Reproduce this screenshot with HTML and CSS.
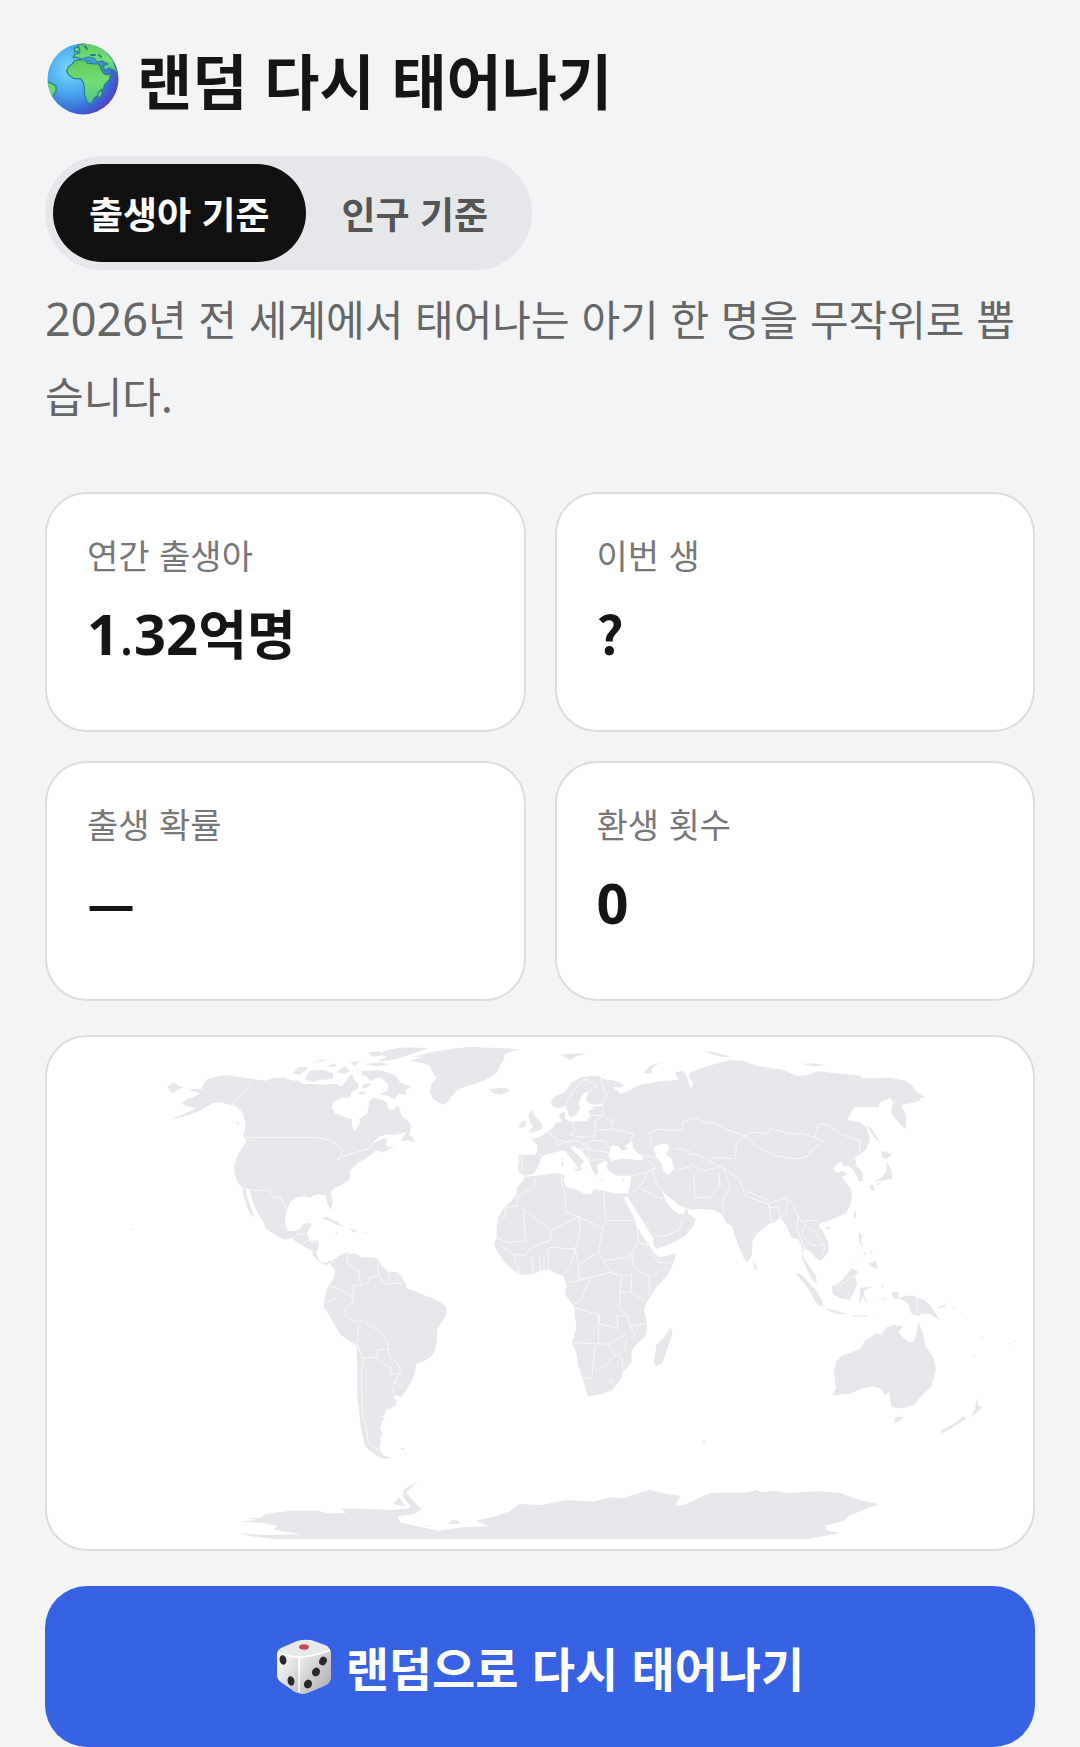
FILE: index.html
```html
<!DOCTYPE html>
<html lang="ko">

<head>
  <meta charset="UTF-8" />
  <meta name="viewport" content="width=device-width, initial-scale=1.0" />
  <title>랜덤 다시 태어나기</title>
  <link rel="stylesheet" href="styles.css">
</head>

<body>
  <main class="page">

    <h1 class="title">
      <svg class="globe" viewBox="0 0 72 72" aria-hidden="true">
        <defs>
          <radialGradient id="sea" cx="0.32" cy="0.36" r="0.72">
            <stop offset="0" stop-color="#7bdcfb" />
            <stop offset="0.5" stop-color="#46a4ee" />
            <stop offset="0.85" stop-color="#3a63d2" />
            <stop offset="1" stop-color="#5a3fc0" />
          </radialGradient>
          <linearGradient id="land" x1="0" y1="0" x2="0" y2="1">
            <stop offset="0" stop-color="#62c95c" />
            <stop offset="0.5" stop-color="#72de78" />
            <stop offset="1" stop-color="#4fc48e" />
          </linearGradient>
          <clipPath id="ball"><circle cx="36" cy="36" r="35.5" /></clipPath>
        </defs>
        <circle cx="36" cy="36" r="35.5" fill="url(#sea)" />
        <g clip-path="url(#ball)" fill="url(#land)" stroke="#2b7f86" stroke-width="1.2" stroke-linejoin="round">
          <path d="M26 15l2-4 5-1-4-2 2-6 13-3 14 8 8 10 5 15-4-5-5-2-4 3-2-5 5-2-6-3-5 1-3-4-6-1-6 2-6-2z" />
          <path d="M19.500 28.700l2-5 4-3 2-3 5-1 6 .5 2 3 5 .5 7 .5 2 6 3 4 6 .5-1 5-5 5-1 5-4 5-5 3-3 6-4-1-3-8 0-6-1-6-3-4-6 0-5-3z" />
          <path d="M51 54l0-4 4-4 0 5-2 4z" />
          <path d="M-1 39l5 1 5 3 0 5-3 5-2 2-6-8z" />
          <path d="M27 5l5-1 1 4-5 1z" />
        </g>
        <g fill="none" stroke="#2b7f86" stroke-width="2" stroke-linecap="round">
          <path d="M36 16l9 2" stroke="#3b93c6" stroke-width="3" />
          <path d="M44 12l4 0M52 12l2 2M38 3l2 3" />
        </g>
      </svg>
      <span>랜덤 다시 태어나기</span>
    </h1>

    <div class="mode">
      <button class="mode-button active" type="button" aria-pressed="true">출생아 기준</button>
      <button class="mode-button" type="button" aria-pressed="false">인구 기준</button>
    </div>

    <p class="description"><span class="year">2026</span>년 전 세계에서 태어나는 아기 한 명을 무작위로 뽑습니다.</p>

    <section class="stats">
      <div class="card">
        <p class="label">연간 출생아</p>
        <p class="value"><span class="num">1<span class="dot">.</span>32</span>억명</p>
      </div>
      <div class="card">
        <p class="label">이번 생</p>
        <p class="value">?</p>
      </div>
      <div class="card">
        <p class="label">출생 확률</p>
        <p class="value">—</p>
      </div>
      <div class="card">
        <p class="label">환생 횟수</p>
        <p class="value"><span class="num">0</span></p>
      </div>
    </section>

    <div class="map-card">
      <svg class="map" viewBox="47 1038 986 512" role="img" aria-label="세계 지도">
        <!-- North America, Greenland, Caribbean -->
        <g transform="translate(150 1035) scale(.33333)">
          <path class="land" d="M160,150 172,135 200,128 230,124 262,128 325,137 345,140 370,133 400,130 430,140 445,138 455,150 490,150 520,152 560,150 575,158 585,145 595,130 605,120 615,140 628,150 622,165 605,175 600,190 575,192 550,205 545,220 555,238 575,245 590,252 605,255 607,275 613,291 620,285 630,265 627,255 650,240 655,225 658,200 670,192 690,195 710,205 715,225 730,228 745,212 752,235 755,245 770,258 785,275 780,290 760,297 735,302 705,302 685,310 668,328 690,318 705,312 712,320 705,330 715,340 735,335 720,345 695,357 690,350 675,352 660,365 640,378 625,385 608,402 600,410 600,430 597,438 570,455 550,465 543,475 548,505 543,528 537,520 530,500 527,485 505,480 490,483 480,492 465,487 440,490 420,505 413,525 405,550 408,580 415,590 435,592 450,585 458,570 480,566 485,570 475,590 470,600 480,618 505,620 507,630 500,662 508,680 525,688 540,678 556,690 548,702 540,688 525,694 505,682 490,665 485,650 465,640 440,625 425,612 405,617 380,605 345,582 343,568 325,540 310,510 300,470 288,462 290,485 300,510 305,525 313,552 300,540 290,515 280,480 278,462 262,445 253,415 253,390 265,360 280,335 290,322 283,310 278,300 285,285 285,265 278,240 265,225 250,213 235,212 215,205 190,207 175,215 155,228 110,245 55,258 120,232 140,222 125,220 95,210 110,195 130,190 150,178 120,170 125,165 155,165z" />
          <path class="land" d="M52,160 72,143 85,155 102,160 80,168 70,178 60,172z" />
          <path class="land" d="M465,135 480,110 520,108 550,118 548,135 510,138 490,145zM428,118 445,100 475,98 465,112 445,122zM645,90 690,85 720,92 680,97zM685,80 710,68 690,60 710,48 760,40 835,42 800,55 770,65 740,75 700,82zM655,55 690,52 695,65 665,68zM480,85 530,75 520,82zM530,97 560,88 555,100zM600,85 630,82 615,95zM560,115 585,95 600,110 585,120zM640,150 665,148 655,158 635,165zM622,182 635,170 650,180z" />
          <path class="land" d="M635,112 690,108 720,118 740,128 750,145 783,158 765,170 770,182 745,180 735,195 710,185 690,182 712,170 715,150 690,130 660,140 650,128 635,122z" />
          <path class="land" d="M752,322 768,295 780,290 778,305 790,310 792,328 775,318zM512,555 530,548 555,560 582,577 560,572 540,560zM597,583 625,590 612,596zM553,594 567,596 560,600zM640,594 652,596 646,599zM256,268 264,262 266,272z" />
          <path class="land" d="M775,82 820,68 790,68 845,55 900,45 960,38 1040,42 1110,45 1065,60 1060,80 1050,95 1045,110 1030,125 1000,140 975,150 940,160 915,175 900,195 885,212 870,208 850,195 840,175 845,150 860,130 845,110 840,95 810,85z" />
          <path class="land" d="M-58,583 -54,582 -53,588 -57,588z" />
          <path class="border" d="M308,142 248,210 270,225 278,240 285,270 282,300 297,318M290,310H500L545,320 575,345 575,365 562,377 600,360 655,345 668,328 695,308M278,462 318,470 355,468 375,492 390,488 410,525M430,612 445,600 465,600M455,632 470,620 502,626M485,650 502,656" />
        </g>
        <!-- South America -->
        <g transform="translate(300 1230) scale(.33333)">
          <path class="land" d="M98,95 115,80 145,68 150,75 165,72 185,85 220,85 232,90 245,108 265,128 295,130 305,145 318,165 320,178 350,188 375,200 400,208 420,218 438,232 440,255 428,275 412,300 410,335 405,365 395,382 370,397 348,405 345,430 335,455 315,490 305,503 285,498 280,503 290,515 288,530 275,538 258,543 255,558 240,562 255,565 245,580 240,602 248,612 240,625 245,640 238,650 240,665 255,682 278,688 250,690 230,680 210,665 195,650 190,630 183,600 180,570 177,540 172,500 172,430 170,350 150,335 125,320 105,290 85,255 70,235 72,225 75,200 85,170 100,150 105,125 98,110z" />
          <path class="land" d="M300,658 315,656 310,662z" />
          <path class="border" d="M145,68 140,95 150,110 175,125 182,168 162,170 158,220 135,240 140,265 165,278 195,272 205,290 240,305 262,340 265,360 235,362 230,385 195,385 188,390 172,345 175,285M182,168 205,160 205,148 235,138 235,90M235,138 250,165 310,162M265,128 270,160M295,130 285,160M85,170 120,180 158,205M75,218 95,218 120,190M230,385 250,405 275,420 270,435 295,435 302,425 290,400 270,385 265,360M302,425 283,460 278,495M283,460 312,475M195,385 185,420 185,480 188,560 200,600 205,640 235,665" />
        </g>
        <!-- Europe, western Asia, Africa -->
        <g transform="translate(470 1035) scale(.33333)">
          <path class="land" d="M145,362 195,362 203,350 200,330 183,315 200,312 215,305 235,292 250,280 255,268 275,262 266,240 285,233 285,255 300,262 330,262 350,260 360,245 355,232 370,225 365,218 398,215 395,210 375,212 355,208 348,195 355,175 345,175 330,195 325,210 332,220 315,245 300,250 290,225 285,215 270,222 250,220 243,205 250,190 285,175 305,145 335,130 365,125 390,125 400,135 435,140 462,152 455,160 430,160 450,180 475,172 495,160 515,150 540,148 560,143 590,140 625,138 615,115 640,110 650,125 660,160 668,150 655,125 665,115 672,110 672,528 640,520 625,512 605,495 585,480 575,468 585,495 605,525 620,537 640,540 650,520 655,540 678,555 665,585 640,610 600,630 560,645 552,635 550,615 530,580 515,555 495,525 480,500 472,484 480,450 485,425 460,425 440,425 420,415 408,400 415,385 405,380 395,385 380,395 385,415 378,425 365,405 355,375 335,350 310,335 300,340 320,360 345,385 335,388 332,410 320,395 300,370 285,350 270,350 255,355 235,360 215,368 210,385 200,405 190,420 165,425 150,418 143,405 148,380z" />
          <path class="land" d="M165,428 200,425 240,420 270,418 285,425 280,440 290,460 315,465 345,480 365,480 370,465 400,470 430,478 470,478 478,488 462,490 475,520 495,555 500,575 515,600 540,640 555,660 565,670 590,665 617,658 615,675 595,720 555,765 530,805 522,825 532,875 528,905 495,935 485,950 485,985 460,1015 450,1040 425,1070 395,1080 355,1087 348,1070 340,1040 325,995 320,960 305,925 320,885 315,845 313,820 285,780 290,755 280,725 260,720 240,708 210,710 190,720 150,722 125,705 100,680 80,650 73,630 80,610 80,565 95,530 125,500 140,480 140,460 160,440z" />
          <path class="land" d="M185,225 195,245 215,270 218,285 200,292 175,297 190,275 180,265 175,245zM145,280 155,262 170,260 165,280zM58,165 80,163 110,162 120,170 95,182 70,178zM270,62 320,58 350,60 320,66 300,78zM522,115 540,95 590,82 560,92 545,105 545,118 530,120zM274,382 281,385 279,398 274,399zM275,368 279,376 275,378zM308,404 330,404 325,413zM386,436 402,438 390,440zM455,436 467,434 460,440zM705,52 735,55 760,65 730,62z" />
          <!-- Black Sea and Caspian Sea -->
          <path class="sea" d="M415,365 425,335 445,335 455,350 475,345 465,335 487,322 490,345 520,372 515,380 485,376 450,374 425,382zM550,340 575,330 592,330 598,345 588,360 605,375 612,405 595,422 580,412 575,390 560,370z" />
          <path class="border" d="M203,362 235,368M235,295 260,315 260,335 300,322 330,320M260,318 300,322M308,262 315,290 300,302 330,310 370,305M375,260 375,290 370,320 340,330 325,345 355,345 360,380 405,375M430,255 425,285 375,290M425,285 460,292 490,300 480,325M360,245 400,245 398,215M375,262 400,245 430,265M370,320 405,320 420,345M330,325 370,350 415,355M290,235 290,200 315,165 340,135 372,150 380,155 350,178M395,130 395,150 410,185 398,212M148,370 158,375 155,415M485,425 530,415 560,402 530,375M530,415 515,450 480,485M515,465 560,490 578,492M545,400 560,450 577,470M545,340 540,295 570,285 605,290 640,285 635,265 672,252M615,345 640,345 672,358M615,410 650,400 672,410M550,605 580,608 625,590 640,550M510,362 560,372" />
          <path class="border" d="M195,435 190,460 145,485 140,515 105,520M140,510 245,590 330,545M275,420 275,445 285,480 288,535 325,548 398,582 385,655M400,475 408,560 398,582M408,560H497M160,530 167,620 115,625 78,612M245,590 240,620 185,640 165,665M240,640 315,645 330,600 328,548M315,645 325,690 325,735 360,730 420,715 455,725 485,720M385,655 330,690M385,655 400,680 430,720M400,680 475,670 480,655M500,575 505,620 485,660 490,700 540,728 590,700M505,625 540,635M545,655 565,685 605,688M235,645 235,708M222,665V710M210,670V712M185,670 190,720M100,640 130,660 150,720M165,665 130,660M315,645 300,700 280,720M105,520 105,550 82,566" />
        </g>
        <!-- Southern Africa -->
        <g transform="translate(540 1200) scale(.33333)">
          <path class="land" d="M392,385 398,405 385,440 365,495 345,502 342,485 350,435 370,418z" />
          <path class="border" d="M80,250 115,245 150,235M100,318 125,300 150,235M245,230 240,280 238,330 265,350M275,225 275,280 312,305M240,280H275M325,235 330,290M103,325 150,340 175,345 180,375 235,388 230,350 265,350 270,380 320,375M95,430 175,435 205,435 240,415 260,405M270,380 285,410 275,418M175,345V435M165,440 155,540 130,535M205,435 225,470 200,495 165,520M225,470 245,475 250,520M225,470 255,455 260,420M205,545 215,538 222,545 212,555z" />
        </g>
        <!-- Eastern Asia -->
        <g transform="translate(690 1035) scale(.33333)">
          <path class="land" d="M0,118 25,105 75,90 120,78 160,80 200,95 240,102 280,108 320,125 345,125 385,112 440,118 510,125 520,133 600,132 640,138 665,152 680,175 705,190 690,192 690,200 665,208 645,210 635,215 650,250 648,285 635,275 605,240 603,225 610,205 600,192 570,205 565,220 520,218 492,220 472,258 510,265 530,280 540,315 530,345 510,362 495,370 500,395 518,415 520,440 508,442 500,425 488,405 475,395 460,395 452,382 428,405 445,418 455,410 472,420 455,430 465,440 480,460 487,490 480,515 465,540 440,550 412,562 395,565 385,575 400,595 415,625 415,655 392,682 375,670 360,650 345,645 338,655 345,680 360,700 378,725 380,748 365,735 350,705 338,675 335,640 325,615 305,612 290,575 270,550 255,565 235,570 200,600 188,620 185,665 172,685 160,670 140,620 125,575 110,568 95,540 70,528 35,525 0,527z" />
          <path class="land" d="M528,270 545,285 572,328 560,318 540,292zM575,350 608,360 590,375 575,370zM590,382 605,410 607,435 575,440 550,445 575,430 590,412zM538,455 550,452 555,468 545,470zM557,450 572,446 562,456zM494,532 498,530 498,555 490,548zM408,580 420,578 415,592zM190,680 203,705 193,708zM505,595 518,605 512,622 520,633 508,628zM535,690 558,680 562,705 548,700zM540,645 548,655 545,662zM520,652 528,658 522,664zM508,662 494,680 496,674zM335,90 360,88 415,93 370,97zM48,52 100,62 125,68 90,68z" />
          <path class="sea" d="M0,135 10,145 6,160 0,162z" />
          <path class="border" d="M0,255 25,253 45,268 70,265 105,285 165,305 180,295 235,298 240,283 290,297 340,300 375,310 385,270 415,272 455,302 510,320 508,355 480,385M165,305 205,340 255,365 320,375 360,365 362,350 400,322 375,310M165,305 140,330 135,375 70,370 60,385 100,400 150,440 165,485 235,510 290,490 315,520 325,550 345,570 380,600 405,640 400,660M165,470 235,500M0,360 25,360 60,385M0,390 40,410 85,400M85,415 90,450 60,490 15,490 10,420M100,400 120,455 95,510 105,540M235,510 245,560M235,520 265,520 270,550M290,495 290,540 270,550M325,545 320,580 345,650M365,635 402,632M330,562 385,558M345,570 335,600 365,635M490,400 505,395" />
        </g>
        <!-- South-east Asia and Oceania -->
        <g transform="translate(760 1200) scale(.33333)">
          <path class="land" d="M105,218 125,228 165,270 188,305 188,325 170,315 145,270zM188,328 225,333 262,346 230,345zM216,262 240,250 275,208 295,218 285,235 292,255 270,303 240,298 218,285zM300,267 340,261 315,274 310,285 325,315 308,295 298,318 300,290zM275,348 325,350 325,353 280,352zM330,360 352,350 340,358zM364,256 370,258 368,268zM352,300 388,297 370,302z" />
          <path class="land" d="M395,280 415,278 415,298 435,290 460,290 495,305 515,325 540,365 510,345 485,343 475,352 455,345 445,315 420,300 400,298zM528,324 555,318 562,308 558,322 540,327zM578,320 588,328 584,330zM615,356 626,362 618,361zM632,460 648,475 644,476zM664,410 672,415 668,417zM743,434 750,432 750,437zM757,427 764,424 762,428z" />
          <path class="land" d="M216,590 228,568 222,520 228,490 245,470 300,450 315,425 350,402 365,408 380,385 400,378 430,382 415,400 440,425 460,432 470,400 475,370 490,405 495,440 520,475 528,510 515,560 485,590 460,618 430,628 395,625 390,600 388,578 375,588 360,568 340,562 300,570 275,583 235,588z" />
          <path class="land" d="M408,653 430,653 418,668 403,672zM650,598 655,620 668,625 645,645 630,655 645,630zM612,650 617,660 570,690 548,703 542,695 580,675z" />
          <path class="border" d="M472,290V350M222,262 250,255 270,235 288,232" />
        </g>
        <!-- Antarctica -->
        <g transform="translate(220 1460) scale(.43367 .33333)">
          <path class="land" d="M45,222 100,228 190,226 150,218 125,212 130,200 100,192 50,188 90,182 60,178 95,176 105,165 160,155 225,155 250,163 290,162 280,148 330,150 400,153 430,150 440,143 420,110 425,90 455,68 430,100 445,125 465,150 450,165 410,172 415,190 450,200 505,215 560,205 620,202 590,185 640,170 670,155 690,135 740,138 800,123 860,128 900,115 930,118 990,92 1030,105 1062,110 1050,140 1070,138 1130,102 1220,100 1235,92 1250,100 1280,95 1310,103 1380,97 1430,102 1480,125 1520,135 1450,170 1440,185 1395,200 1400,215 1432,222 1355,240 125,240 70,232z" />
          <path class="land" d="M525,195 535,183 550,185 552,195zM400,135 412,113 428,142zM470,200 486,198 486,202z" />
        </g>
        <path class="land" d="M702,1442 705,1441 705,1444z" />
      </svg>
    </div>

    <button class="roll-button" type="button">
      <svg class="dice" viewBox="0 0 56 56" aria-hidden="true">
        <defs>
          <linearGradient id="left" x1="0" y1="0" x2="1" y2="1">
            <stop offset="0" stop-color="#ffffff" />
            <stop offset="1" stop-color="#c4c4c8" />
          </linearGradient>
          <linearGradient id="right" x1="0" y1="0" x2="1" y2="1">
            <stop offset="0" stop-color="#f2f2f2" />
            <stop offset="1" stop-color="#a9a9ae" />
          </linearGradient>
        </defs>
        <path d="M1 15Q1 11 5 9L21 2Q28 0 35 1L49 6Q54 8 55 14L55 38Q54 44 50 46L31 54Q25 56 20 53L5 43Q2 41 1 37z" fill="#e9e9ea" />
        <path d="M1 14Q10 19 20 19Q23 20 23 25L23 54Q21 54 19 53L5 43Q2 41 1 37z" fill="url(#left)" />
        <path d="M55 12Q42 17 29 18Q24 19 24 25L23 54Q27 55 31 54L50 46Q54 44 55 38z" fill="url(#right)" />
        <path d="M2 13Q12 18 23 18Q40 17 54 11M23 19L23 53" fill="none" stroke="#fff" stroke-width="1.500" />
        <ellipse cx="28" cy="8" rx="5" ry="2.800" fill="#c34a5e" />
        <g fill="#29292b">
          <ellipse cx="7" cy="21" rx="3.400" ry="4.800" transform="rotate(-12 7 21)" />
          <ellipse cx="15" cy="42" rx="3.400" ry="4.800" transform="rotate(-12 15 42)" />
          <ellipse cx="47" cy="22" rx="3.700" ry="4.500" transform="rotate(25 47 22)" />
          <ellipse cx="40" cy="33" rx="3.900" ry="4.500" transform="rotate(25 40 33)" />
          <ellipse cx="32" cy="45" rx="3.900" ry="4.500" transform="rotate(25 32 45)" />
        </g>
      </svg>
      <span>랜덤으로 다시 태어나기</span>
    </button>

  </main>
</body>

</html>
```
FILE: styles.css
```css
* {
  margin: 0;
  padding: 0;
  box-sizing: border-box;
}

body {
  background-color: #f3f4f6;
  color: #151515;
  font-family: "Noto Sans CJK KR", "Noto Sans", sans-serif;
}

.page {
  padding: 40px 45px 0;
}

/* Title */
.title {
  display: flex;
  align-items: center;
  gap: 18px;
  padding-left: 2px;
  margin-bottom: 38px;
  font-size: 60px;
  line-height: 78px;
  font-weight: 700;
}

.globe {
  width: 72px;
  height: 72px;
}

/* Mode switch */
.mode {
  display: inline-flex;
  padding: 8px;
  border-radius: 57px;
  background-color: #e6e7ea;
}

.mode-button {
  padding: 0 36px;
  border: none;
  border-radius: 49px;
  background-color: transparent;
  color: #555;
  font-family: inherit;
  font-size: 37px;
  line-height: 98px;
  font-weight: 700;
  cursor: pointer;
}

.mode-button.active {
  background-color: #111;
  color: #fff;
}

.description {
  margin: 9px 0 59px;
  color: #666;
  font-size: 42px;
  line-height: 77px;
  word-break: break-all;
}

.year {
  font-family: "Noto Sans", sans-serif;
  font-size: 45px;
  line-height: 1;
}

/* Stat cards */
.stats {
  display: grid;
  grid-template-columns: 1fr 1fr;
  gap: 29px;
  margin-bottom: 34px;
}

.card,
.map-card {
  border: 2px solid #dcdedd;
  border-radius: 42px;
  background-color: #fff;
}

.card {
  padding: 36px 40px 54px;
}

.label {
  margin-bottom: 8px;
  color: #777;
  font-size: 34px;
  line-height: 50px;
}

.value {
  font-size: 53px;
  line-height: 88px;
  font-weight: 700;
}

.num {
  font-family: "Noto Sans", sans-serif;
  font-size: 56px;
  line-height: 1;
}

.dot {
  font-weight: 400;
}

/* World map */
.map-card {
  margin-bottom: 35px;
}

.map {
  display: block;
  width: 100%;
}

.land {
  fill: #e6e7ea;
}

.sea {
  fill: #fff;
}

.border {
  fill: none;
  stroke: #fff;
  stroke-width: 2;
  stroke-linejoin: round;
}

/* Main button */
.roll-button {
  display: flex;
  justify-content: center;
  align-items: center;
  gap: 14px;
  width: 100%;
  padding: 40px;
  border: none;
  border-radius: 42px;
  background-color: #3862e4;
  color: #fff;
  font-family: inherit;
  font-size: 47px;
  line-height: 81px;
  font-weight: 700;
  cursor: pointer;
}

.dice {
  width: 56px;
  height: 56px;
}
```
